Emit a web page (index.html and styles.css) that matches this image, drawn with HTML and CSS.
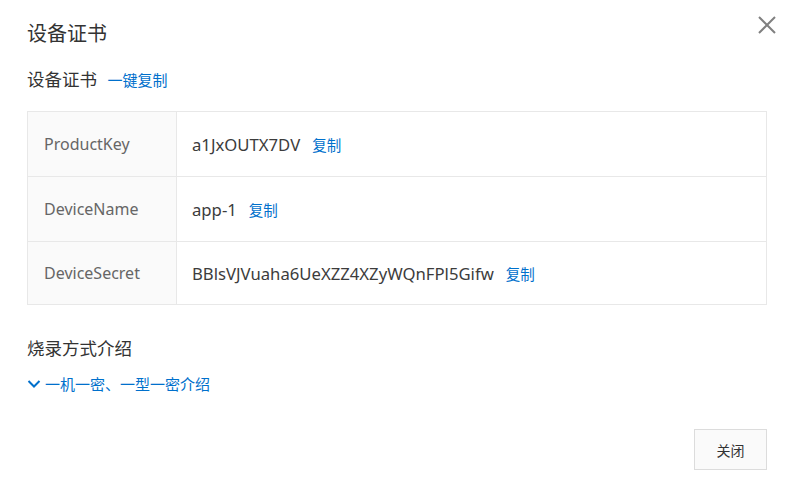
FILE: index.html
```html
<!DOCTYPE html>
<html lang="zh-CN">
<head>
    <meta charset="UTF-8">
    <meta name="viewport" content="width=device-width, initial-scale=1.0">
    <title>设备证书</title>
    <link rel="stylesheet" href="styles.css">
</head>
<body>
    <div class="dialog">
        <div class="dialog-header">
            <h1>设备证书</h1>
            <span class="close-icon">
                <svg width="18" height="18" viewBox="0 0 18 18">
                    <path d="M1 1 L17 17 M17 1 L1 17" stroke="#808080" stroke-width="2" fill="none"/>
                </svg>
            </span>
        </div>

        <div class="section-title">
            设备证书 <a class="link copy-all">一键复制</a>
        </div>

        <div class="cert-table">
            <div class="cert-row">
                <div class="cert-label">ProductKey</div>
                <div class="cert-value">a1JxOUTX7DV <a class="link">复制</a></div>
            </div>
            <div class="cert-row">
                <div class="cert-label">DeviceName</div>
                <div class="cert-value">app-1 <a class="link">复制</a></div>
            </div>
            <div class="cert-row last">
                <div class="cert-label">DeviceSecret</div>
                <div class="cert-value">BBlsVJVuaha6UeXZZ4XZyWQnFPl5Gifw <a class="link">复制</a></div>
            </div>
        </div>

        <div class="section-title burn-title">烧录方式介绍</div>

        <a class="link toggle">
            <svg width="14" height="10" viewBox="0 0 14 10">
                <path d="M1.5 2 L7 7.5 L12.5 2" stroke="#0070cc" stroke-width="2" fill="none"/>
            </svg>
            一机一密、一型一密介绍
        </a>

        <div class="dialog-footer">
            <button class="close-button">关闭</button>
        </div>
    </div>
</body>
</html>
```

FILE: styles.css
```css
body {
    margin: 0;
    background: #fff;
    font-family: "Noto Sans", "Noto Sans CJK SC", sans-serif;
    color: #333;
}

.dialog {
    width: 793px;
    padding: 0 26px 0 27px;
    box-sizing: border-box;
}

.dialog-header {
    height: 64px;
    display: flex;
    align-items: center;
    justify-content: space-between;
}

.dialog-header h1 {
    margin: 0;
    font-size: 20px;
    font-weight: normal;
    color: #333;
}

.close-icon {
    display: flex;
    margin-right: -9px;
    margin-top: -14px;
}

.link {
    color: #0070cc;
    font-size: 14.5px;
    cursor: pointer;
}

.section-title {
    font-size: 17.5px;
    line-height: 30px;
    color: #333;
}

.copy-all {
    margin-left: 6px;
    font-size: 15px;
}

.cert-table {
    margin-top: 16px;
    border: 1px solid #e8e8e8;
}

.cert-row {
    display: flex;
    height: 64px;
}

.cert-row.last {
    height: 62px;
}

.cert-row + .cert-row {
    border-top: 1px solid #e8e8e8;
}

.cert-label {
    width: 149px;
    padding-left: 16px;
    box-sizing: border-box;
    background: #fafafa;
    border-right: 1px solid #e8e8e8;
    display: flex;
    align-items: center;
    font-size: 16px;
    color: #666;
}

.cert-value {
    padding-left: 15px;
    display: flex;
    align-items: center;
    font-size: 16.7px;
    color: #3c3c3c;
}

.cert-value .link {
    margin-left: 12px;
}

.burn-title {
    margin-top: 28px;
}

.toggle {
    display: flex;
    align-items: center;
    gap: 4px;
    margin-top: 10px;
    line-height: 22px;
    font-size: 15px;
}

.dialog-footer {
    display: flex;
    justify-content: flex-end;
    margin-top: 34px;
}

.close-button {
    width: 73px;
    height: 41px;
    background: #fafafa;
    border: 1px solid #dcdcdc;
    font-family: "Noto Sans CJK SC", sans-serif;
    font-size: 14px;
    color: #333;
    padding: 0;
}
```
